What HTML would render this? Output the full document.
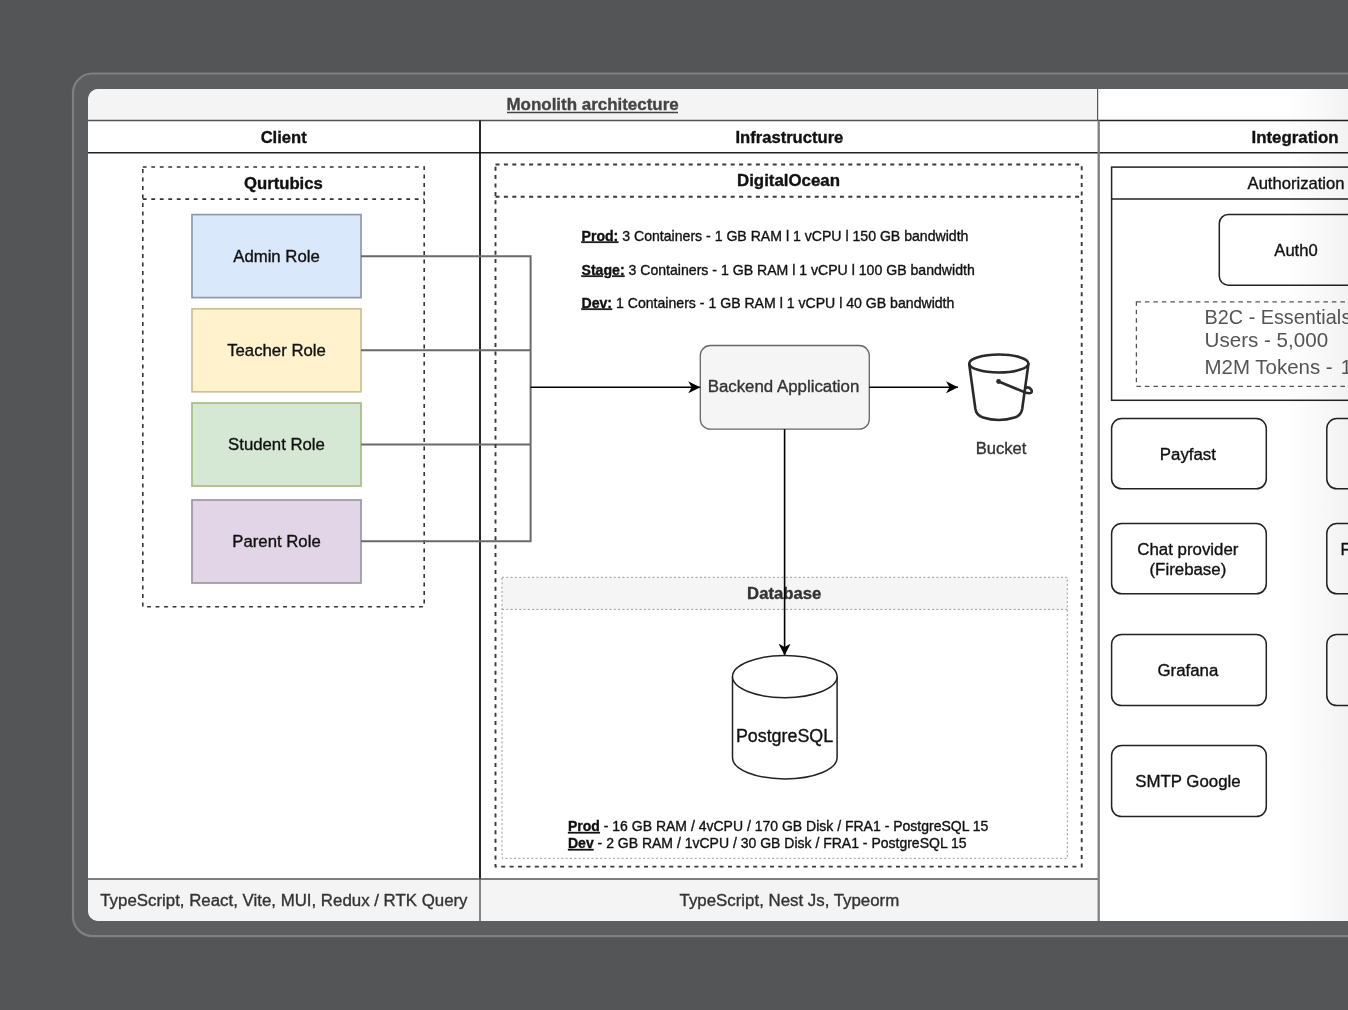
<!DOCTYPE html>
<html>
<head>
<meta charset="utf-8">
<style>
html,body{margin:0;padding:0;background:#545557;width:1348px;height:1010px;overflow:hidden;}
svg{display:block;will-change:transform;}
text{font-family:"Liberation Sans",sans-serif;stroke-width:0.35px;}
</style>
</head>
<body>
<svg width="1348" height="1010" viewBox="0 0 1348 1010">
<defs>
  <linearGradient id="fade" x1="0" y1="0" x2="1" y2="0">
    <stop offset="0" stop-color="#000" stop-opacity="0"/>
    <stop offset="1" stop-color="#000" stop-opacity="0.05"/>
  </linearGradient>
  <marker id="arr" viewBox="0 0 12 12" refX="12" refY="6" markerWidth="12" markerHeight="12" markerUnits="userSpaceOnUse" orient="auto">
    <path d="M0,0 L12,6 L0,12 L3.5,6 Z" fill="#000"/>
  </marker>
</defs>
<!-- background -->
<rect x="0" y="0" width="1348" height="1010" fill="#545557"/>
<!-- frame -->
<rect x="73" y="73.5" width="1400" height="862.6" rx="19.5" ry="19.5" fill="#5d5e60" stroke="#7f8082" stroke-width="2.2"/>
<!-- inner white -->
<rect x="88" y="89" width="1400" height="832" rx="10.5" ry="10.5" fill="#ffffff"/>
<!-- header gray -->
<path d="M88,120.5 V99.5 A10.5,10.5 0 0 1 98.5,89 H1098 V120.5 Z" fill="#f4f4f4"/>
<!-- footer gray -->
<path d="M88,879 V910.5 A10.5,10.5 0 0 0 98.5,921 H1098 V879 Z" fill="#f4f4f4"/>

<!-- grid lines -->
<line x1="88" y1="120.5" x2="1098" y2="120.5" stroke="#555" stroke-width="1.4"/>
<line x1="1098" y1="120.5" x2="1348" y2="120.5" stroke="#222" stroke-width="1.4"/>
<line x1="88" y1="152.8" x2="1348" y2="152.8" stroke="#222" stroke-width="1.5"/>
<line x1="480" y1="120.5" x2="480" y2="879" stroke="#111" stroke-width="1.8"/>
<line x1="480" y1="879" x2="480" y2="921" stroke="#555" stroke-width="1.4"/>
<line x1="88" y1="879" x2="1098" y2="879" stroke="#555" stroke-width="1.4"/>
<line x1="1097.6" y1="89" x2="1097.6" y2="120.5" stroke="#555" stroke-width="1.2"/>
<line x1="1098.7" y1="120.5" x2="1098.7" y2="921" stroke="#808080" stroke-width="2.3"/>

<!-- header texts -->
<text x="592.6" y="110" font-size="16.95" font-weight="bold" fill="#444" text-anchor="middle" stroke="#444">Monolith architecture</text>
<line x1="507" y1="112.5" x2="678" y2="112.5" stroke="#444" stroke-width="1.3"/>
<text x="283.7" y="142.6" font-size="16.6" font-weight="bold" fill="#111" text-anchor="middle" stroke="#111">Client</text>
<text x="789.4" y="142.6" font-size="16.6" font-weight="bold" fill="#111" text-anchor="middle" stroke="#111">Infrastructure</text>
<text x="1295" y="142.6" font-size="16.85" font-weight="bold" fill="#111" text-anchor="middle" stroke="#111">Integration</text>

<!-- footer texts -->
<text x="283.9" y="905.5" font-size="16.85" fill="#333" text-anchor="middle" stroke="#333">TypeScript, React, Vite, MUI, Redux / RTK Query</text>
<text x="789.4" y="905.5" font-size="16.85" fill="#333" text-anchor="middle" stroke="#333">TypeScript, Nest Js, Typeorm</text>

<!-- ========== CLIENT ========== -->
<rect x="142.8" y="167" width="281.4" height="439.8" fill="none" stroke="#333" stroke-width="1.6" stroke-dasharray="3.8 4.7"/>
<line x1="142.8" y1="199.1" x2="424.2" y2="199.1" stroke="#333" stroke-width="1.6" stroke-dasharray="3.8 4.7"/>
<text x="283.4" y="188.5" font-size="16.7" font-weight="bold" fill="#111" text-anchor="middle" stroke="#111">Qurtubics</text>

<rect x="192" y="214.6" width="169" height="83" fill="#dae8fc" stroke="#8f99ad" stroke-width="1.7"/>
<text x="276.5" y="261.8" font-size="16.75" fill="#111" text-anchor="middle" stroke="#111">Admin Role</text>
<rect x="192" y="308.8" width="169" height="83" fill="#fff2cc" stroke="#cac195" stroke-width="1.7"/>
<text x="276.5" y="356" font-size="16.75" fill="#111" text-anchor="middle" stroke="#111">Teacher Role</text>
<rect x="192" y="403" width="169" height="83" fill="#d5e8d4" stroke="#a9bd84" stroke-width="1.7"/>
<text x="276.5" y="450.2" font-size="16.75" fill="#111" text-anchor="middle" stroke="#111">Student Role</text>
<rect x="192" y="500" width="169" height="83" fill="#e1d5e7" stroke="#9c97a3" stroke-width="1.7"/>
<text x="276.5" y="547.2" font-size="16.75" fill="#111" text-anchor="middle" stroke="#111">Parent Role</text>

<!-- connectors -->
<g stroke="#6a6a6a" stroke-width="2" fill="none">
  <polyline points="361,256.2 530.6,256.2 530.6,541.3 361,541.3"/>
  <line x1="361" y1="350.2" x2="530.6" y2="350.2"/>
  <line x1="361" y1="444.4" x2="530.6" y2="444.4"/>
</g>

<!-- ========== INFRA ========== -->
<rect x="495.5" y="164.5" width="586.2" height="702.1" fill="none" stroke="#3a3a3a" stroke-width="1.9" stroke-dasharray="4 4.4"/>
<line x1="495.5" y1="196.7" x2="1081.7" y2="196.7" stroke="#3a3a3a" stroke-width="1.9" stroke-dasharray="4 4.4"/>
<text x="788.5" y="185.8" font-size="16.85" font-weight="bold" fill="#111" text-anchor="middle" stroke="#111">DigitalOcean</text>

<g font-size="14.1" fill="#111" stroke="#111">
  <text x="581.5" y="240.5"><tspan font-weight="bold" text-decoration="underline">Prod:</tspan> 3 Containers - 1 GB RAM l 1 vCPU l 150 GB bandwidth</text>
  <text x="581.5" y="274.5"><tspan font-weight="bold" text-decoration="underline">Stage:</tspan> 3 Containers - 1 GB RAM l 1 vCPU l 100 GB bandwidth</text>
  <text x="581.5" y="307.5"><tspan font-weight="bold" text-decoration="underline">Dev:</tspan> 1 Containers - 1 GB RAM l 1 vCPU l 40 GB bandwidth</text>
</g>

<!-- backend -->
<rect x="700.3" y="345.5" width="169" height="83.7" rx="10" ry="10" fill="#f5f5f5" stroke="#666" stroke-width="1.3"/>
<text x="783.5" y="392.1" font-size="16.85" fill="#333" text-anchor="middle" stroke="#333">Backend Application</text>

<!-- arrows -->
<line x1="530.6" y1="387.3" x2="700.2" y2="387.3" stroke="#000" stroke-width="1.4" marker-end="url(#arr)"/>
<line x1="869.3" y1="387.3" x2="958" y2="387.3" stroke="#000" stroke-width="1.4" marker-end="url(#arr)"/>

<!-- bucket -->
<g fill="none" stroke="#2a2a2a" stroke-width="2.6" stroke-linecap="round" stroke-linejoin="round">
  <ellipse cx="998.8" cy="363.5" rx="29.6" ry="9"/>
  <path d="M969.2,364 L975.4,409 Q976.5,415.5 983,417.5 Q998.8,422.5 1014.6,417.5 Q1021.1,415.5 1022.2,409 L1028.4,364"/>
  <path d="M998.6,381.5 L1026,392.8 Q1033,394.5 1031.5,390 Q1029,386 1025.5,388"/>
</g>
<circle cx="998.6" cy="381.5" r="2.4" fill="#2a2a2a"/>
<text x="1001" y="454" font-size="16.6" fill="#333" text-anchor="middle" stroke="#333">Bucket</text>

<!-- database -->
<rect x="502" y="577.3" width="565.3" height="32.1" fill="#f5f5f5" stroke="none"/>
<rect x="502" y="577.3" width="565.3" height="281" fill="none" stroke="#999" stroke-width="1" stroke-dasharray="2 2.3"/>
<line x1="502" y1="609.4" x2="1067.3" y2="609.4" stroke="#999" stroke-width="1" stroke-dasharray="2 2.3"/>
<text x="784.2" y="598.7" font-size="16.7" font-weight="bold" fill="#333" text-anchor="middle" stroke="#333">Database</text>

<line x1="784.6" y1="429.2" x2="784.6" y2="655.6" stroke="#000" stroke-width="1.6" marker-end="url(#arr)"/>

<!-- cylinder -->
<g fill="#fff" stroke="#222" stroke-width="1.5">
  <path d="M732.5,676.6 V757.8 A52.3,21.1 0 0 0 837.1,757.8 V676.6"/>
  <ellipse cx="784.8" cy="676.6" rx="52.3" ry="21.1"/>
</g>
<text x="784.5" y="742.2" font-size="17.85" fill="#111" text-anchor="middle" stroke="#111">PostgreSQL</text>

<g font-size="14" fill="#111" stroke="#111">
  <text x="568" y="831"><tspan font-weight="bold" text-decoration="underline">Prod</tspan> - 16 GB RAM / 4vCPU / 170 GB Disk / FRA1 - PostgreSQL 15</text>
  <text x="568" y="848"><tspan font-weight="bold" text-decoration="underline">Dev</tspan> - 2 GB RAM / 1vCPU / 30 GB Disk / FRA1 - PostgreSQL 15</text>
</g>

<!-- ========== INTEGRATION ========== -->
<rect x="1111.6" y="167.1" width="300" height="233.2" fill="none" stroke="#222" stroke-width="1.5"/>
<line x1="1111.6" y1="199.1" x2="1411.6" y2="199.1" stroke="#222" stroke-width="1.5"/>
<text x="1296" y="188.6" font-size="16.6" fill="#111" text-anchor="middle" stroke="#111">Authorization</text>

<rect x="1219.3" y="214.5" width="154" height="70.7" rx="9" ry="9" fill="#fff" stroke="#222" stroke-width="1.5"/>
<text x="1296" y="256.2" font-size="16.6" fill="#111" text-anchor="middle" stroke="#111">Auth0</text>

<rect x="1136.4" y="301.8" width="300" height="84.5" fill="none" stroke="#555" stroke-width="1.3" stroke-dasharray="4.5 4"/>
<g font-size="19.8" fill="#555" stroke="none">
  <text x="1204.6" y="323.7" textLength="136.5" lengthAdjust="spacingAndGlyphs">B2C - Essential</text>
  <text x="1341.5" y="323.7">s</text>
  <text x="1204.6" y="347.4" textLength="123.5" lengthAdjust="spacingAndGlyphs">Users - 5,000</text>
  <text x="1204.6" y="373.9" textLength="128" lengthAdjust="spacingAndGlyphs">M2M Tokens -</text>
  <text x="1340.8" y="373.9">1,000</text>
</g>

<g fill="#fff" stroke="#222" stroke-width="1.5">
  <rect x="1111.6" y="418.6" width="154.7" height="70.2" rx="10" ry="10"/>
  <rect x="1111.6" y="523.6" width="154.7" height="70.2" rx="10" ry="10"/>
  <rect x="1111.6" y="634.4" width="154.7" height="71.2" rx="10" ry="10"/>
  <rect x="1111.6" y="745.6" width="154.7" height="71" rx="10" ry="10"/>
  <rect x="1326.8" y="418.6" width="154.7" height="70.2" rx="10" ry="10"/>
  <rect x="1326.8" y="523.6" width="154.7" height="70.2" rx="10" ry="10"/>
  <rect x="1326.8" y="634.4" width="154.7" height="71.2" rx="10" ry="10"/>
</g>
<g font-size="16.85" fill="#111" text-anchor="middle" stroke="#111">
  <text x="1187.9" y="460.2">Payfast</text>
  <text x="1187.9" y="555.3">Chat provider</text>
  <text x="1187.9" y="574.7">(Firebase)</text>
  <text x="1187.9" y="676.3">Grafana</text>
  <text x="1187.9" y="787.4">SMTP Google</text>
</g>
<text x="1340.5" y="555" font-size="16.6" fill="#111" stroke="#111">F</text>

<!-- right fade -->
<rect x="1288" y="89" width="60" height="832" fill="url(#fade)"/>
</svg>
</body>
</html>
